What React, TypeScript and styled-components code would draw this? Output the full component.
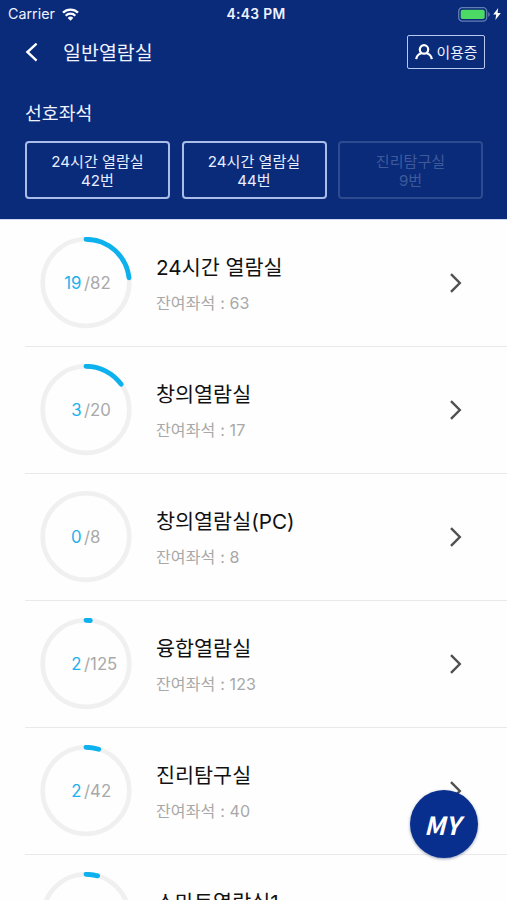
import React from 'react';
import styled, { createGlobalStyle } from 'styled-components';

const GlobalStyle = createGlobalStyle`
  * { box-sizing: border-box; }
  body {
    margin: 0;
    background: #fefefe;
    font-family: Inter, "Noto Sans CJK KR", sans-serif;
  }
  button { font: inherit; color: inherit; background: none; padding: 0; margin: 0; border: 0; }
`;

const Screen = styled.div`
  position: relative;
  width: 507px;
  height: 900px;
  overflow: hidden;
  background: #fefefe;
`;

const Header = styled.header`
  height: 220px;
  background: #0a2a7a;
  border-bottom: 1px solid #cdd9f5;
  color: #eef3ff;
`;

const StatusBar = styled.div`
  height: 28px;
  display: grid;
  grid-template-columns: 1fr auto 1fr;
  align-items: center;
  padding: 0 6px 0 8px;
  font-size: 14px;
  line-height: 28px;
`;

const StatusGroup = styled.div<{ $end?: boolean }>`
  display: flex;
  align-items: center;
  justify-content: ${(p) => (p.$end ? 'flex-end' : 'flex-start')};
  gap: ${(p) => (p.$end ? '3px' : '7px')};
`;

const Carrier = styled.span`
  font-size: 14.3px;
`;

const Clock = styled.span`
  margin-left: 3px;
  font-size: 13.8px;
  font-weight: 600;
  letter-spacing: 0.35px;
`;

const TitleBar = styled.div`
  height: 48px;
  display: flex;
  align-items: center;
  padding: 0 22px 0 25px;
`;

const BackButton = styled.button`
  width: 14px;
  height: 20px;
  display: flex;
`;

const PageTitle = styled.h1`
  margin: 0 auto 0 24px;
  padding-top: 2px;
  font-size: 19.5px;
  line-height: 28px;
  font-weight: 400;
`;

const PassButton = styled.button`
  width: 78px;
  height: 34px;
  display: flex;
  align-items: center;
  justify-content: center;
  gap: 4px;
  border: 1.5px solid #b9c9ee;
  border-radius: 2px;
  font-size: 14.8px;
  line-height: 20px;
`;

const PassLabel = styled.span`
  padding-top: 1px;
`;

const Preferred = styled.section`
  padding: 24px 24px 0 25px;
`;

const PreferredTitle = styled.h2`
  margin: 0;
  font-size: 18.3px;
  line-height: 26px;
  font-weight: 400;
`;

const SeatGrid = styled.div`
  display: grid;
  grid-template-columns: repeat(3, 145px);
  gap: 11.5px;
  margin-top: 15px;
`;

const SeatCard = styled.button<{ $disabled?: boolean }>`
  height: 58px;
  display: flex;
  flex-direction: column;
  align-items: center;
  justify-content: center;
  border: 2px solid ${(p) => (p.$disabled ? '#2f4b8f' : '#a9bde8')};
  border-radius: 4px;
  color: ${(p) => (p.$disabled ? '#3f5a9a' : '#e6eeff')};
  font-size: 15.1px;
  line-height: 19px;
  padding-top: 1px;
`;

const RoomRow = styled.li`
  height: 127px;
  margin-left: 25px;
  padding: 0 45px 0 15px;
  display: flex;
  align-items: center;
  border-bottom: 1px solid #e9e9e9;
`;

const RoomList = styled.ul`
  list-style: none;
  margin: 0;
  padding: 0;
`;

const Gauge = styled.div`
  width: 92px;
  height: 92px;
  display: grid;
  grid-template: 92px / 92px;
  flex: none;
  > * { grid-area: 1 / 1; }
`;

const Count = styled.div`
  display: grid;
  grid-template-columns: 41.5px 1fr;
  column-gap: 2.5px;
  align-items: center;
  font-size: 16.8px;
  line-height: 20px;
  color: #a9a9a9;
`;

const Used = styled.span`
  color: #1db0ec;
  text-align: right;
`;

const RoomInfo = styled.div`
  flex: 1;
  margin-left: 24px;
  padding-top: 1px;
`;

const RoomName = styled.div`
  font-size: 20.7px;
  line-height: 30px;
  color: #111;
`;

const Remaining = styled.div`
  margin-top: 8px;
  font-size: 16px;
  line-height: 24px;
  letter-spacing: 0.15px;
  color: #a8a8a8;
`;

const FloatingButton = styled.button`
  position: absolute;
  left: 410px;
  top: 790px;
  width: 68px;
  height: 68px;
  padding-right: 4px;
  border-radius: 50%;
  background: #082f8e;
  color: #fff;
  font: italic 700 25px/68px "Noto Sans CJK KR", sans-serif;
  text-align: center;
  box-shadow: 0 1px 3px rgba(20, 40, 90, 0.45);
`;

const RADIUS = 43.3;
const LENGTH = 2 * Math.PI * RADIUS;

function SeatGauge({ used, total }: { used: number; total: number }) {
  return (
    <Gauge>
      <svg width="92" height="92" viewBox="0 0 92 92" fill="none">
        <circle cx="46" cy="45.6" r={RADIUS} stroke="#f0f0f0" strokeWidth="4.6" />
        {used > 0 && (
          <circle
            cx="46"
            cy="45.6"
            r={RADIUS}
            stroke="#0cb1ed"
            strokeWidth="4.8"
            strokeLinecap="round"
            strokeDasharray={`${(used / total) * LENGTH} ${LENGTH}`}
            transform="rotate(-90 46 45.6)"
          />
        )}
      </svg>
      <Count>
        <Used>{used}</Used>
        <span>/{total}</span>
      </Count>
    </Gauge>
  );
}

const rooms = [
  { name: '24시간 열람실', used: 19, total: 82 },
  { name: '창의열람실', used: 3, total: 20 },
  { name: '창의열람실(PC)', used: 0, total: 8 },
  { name: '융합열람실', used: 2, total: 125 },
  { name: '진리탐구실', used: 2, total: 42 },
  { name: '스마트열람실1', used: 2, total: 46 },
];

const seats = [
  { room: '24시간 열람실', seat: '42번' },
  { room: '24시간 열람실', seat: '44번' },
  { room: '진리탐구실', seat: '9번', disabled: true },
];

const WifiIcon = () => (
  <svg width="17" height="13" viewBox="0 0 17 13" fill="none" stroke="#fff" strokeWidth="2.3">
    <path d="M1 4.6a10.7 10.7 0 0 1 15 0" />
    <path d="M3.7 7.7a6.8 6.8 0 0 1 9.6 0" />
    <path d="M8.5 12.7 5.7 9.9a4 4 0 0 1 5.6 0z" fill="#fff" stroke="none" />
  </svg>
);

const BatteryIcon = () => (
  <svg width="32" height="15" viewBox="0 0 32 15">
    <rect x=".7" y=".7" width="28" height="13.4" rx="3.6" fill="none" stroke="#637eb5" strokeWidth="1.3" />
    <rect x="2.7" y="2.7" width="24" height="9.4" rx="1.8" fill="#4cd964" />
    <path d="M30.2 5v4.8q1.6-.8 1.6-2.4t-1.6-2.4z" fill="#637eb5" />
  </svg>
);

const BoltIcon = () => (
  <svg width="8" height="12" viewBox="0 0 8 12">
    <path d="M5.2 0 .2 6.6h3L2.4 12l5.4-7H4.6z" fill="#fff" />
  </svg>
);

const PersonIcon = () => (
  <svg width="18" height="16" viewBox="0 0 18 16" fill="none" stroke="#fff" strokeWidth="2.2">
    <circle cx="9" cy="5.4" r="4.2" />
    <path d="M1.2 15.2c.4-3.4 2.5-5.3 5.2-6M16.8 15.2c-.4-3.4-2.5-5.3-5.2-6" />
  </svg>
);

export default function App() {
  return (
    <Screen>
      <GlobalStyle />
      <Header>
        <StatusBar>
          <StatusGroup>
            <Carrier>Carrier</Carrier>
            <WifiIcon />
          </StatusGroup>
          <Clock>4:43 PM</Clock>
          <StatusGroup $end>
            <BatteryIcon />
            <BoltIcon />
          </StatusGroup>
        </StatusBar>
        <TitleBar>
          <BackButton aria-label="뒤로">
            <svg width="14" height="20" viewBox="0 0 14 20" fill="none" stroke="#fff" strokeWidth="2.4">
              <path d="M11.6 1.6 2.4 10l9.2 8.6" />
            </svg>
          </BackButton>
          <PageTitle>일반열람실</PageTitle>
          <PassButton>
            <PersonIcon />
            <PassLabel>이용증</PassLabel>
          </PassButton>
        </TitleBar>
        <Preferred>
          <PreferredTitle>선호좌석</PreferredTitle>
          <SeatGrid>
            {seats.map((s) => (
              <SeatCard key={s.room + s.seat} $disabled={s.disabled}>
                <span>{s.room}</span>
                <span>{s.seat}</span>
              </SeatCard>
            ))}
          </SeatGrid>
        </Preferred>
      </Header>
      <RoomList>
        {rooms.map((r) => (
          <RoomRow key={r.name}>
            <SeatGauge used={r.used} total={r.total} />
            <RoomInfo>
              <RoomName>{r.name}</RoomName>
              <Remaining>잔여좌석 : {r.total - r.used}</Remaining>
            </RoomInfo>
            <svg width="13" height="20" viewBox="0 0 13 20" fill="none" stroke="#505050" strokeWidth="2.4">
              <path d="M2 1.2 10.8 10 2 18.8" />
            </svg>
          </RoomRow>
        ))}
      </RoomList>
      <FloatingButton>MY</FloatingButton>
    </Screen>
  );
}
